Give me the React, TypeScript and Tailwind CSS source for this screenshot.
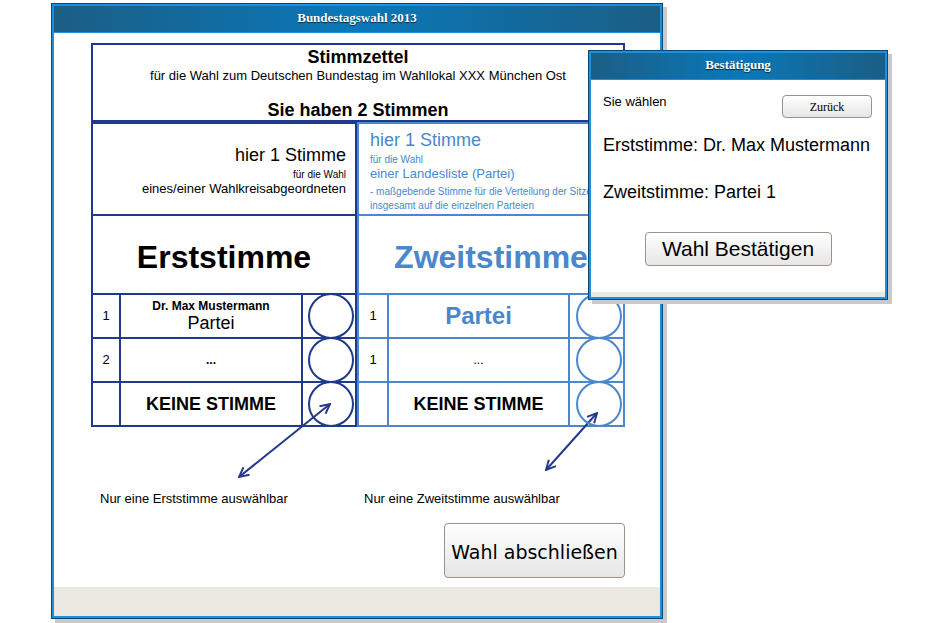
import type { ReactNode } from 'react'

function Row({ num, dark, children }: { num?: string; dark: boolean; children: ReactNode }) {
  const line = dark ? 'border-[#1f3a8c]' : 'border-[#4a87cc]'
  return (
    <div className={`flex h-[44px] border-t-2 ${line}`}>
      <div className={`flex ${dark ? 'w-[28px]' : 'w-[30px]'} items-center justify-center border-r-2 ${line} text-[13px]`}>
        {num}
      </div>
      <div className={`flex ${dark ? 'w-[182px]' : 'w-[181px]'} flex-col items-center justify-center border-r-2 ${line}`}>
        {children}
      </div>
      <div className={`relative z-10 flex flex-1 items-center ${dark ? 'pl-[5px]' : 'pl-[6px]'}`}>
        <div className={`h-[46px] w-[46px] shrink-0 rounded-full border-2 ${line}`} />
      </div>
    </div>
  )
}

function Ballot() {
  return (
    <div className="flex flex-col">
      <div className="flex h-[79px] flex-col items-center border-2 border-[#1f3a8c] pt-[1px]">
        <div className="text-[18px] font-bold leading-[22px]">Stimmzettel</div>
        <div className="text-[13px] leading-[15px]">für die Wahl zum Deutschen Bundestag im Wahllokal XXX München Ost</div>
        <div className="mt-[17px] text-[18px] font-bold leading-[20px]">Sie haben 2 Stimmen</div>
      </div>

      <div className="flex">
        {/* Erststimme */}
        <div className="w-[266px] border-2 border-[#1f3a8c]">
          <div className="h-[92px] border-b-2 border-[#1f3a8c] pr-[9px] pt-[21px] text-right">
            <div className="text-[18px] leading-[20px]">hier 1 Stimme</div>
            <div className="mt-[4px] text-[10px] leading-[12px]">für die Wahl</div>
            <div className="text-[13px] leading-[15px]">eines/einer Wahlkreisabgeordneten</div>
          </div>
          <div className="flex h-[77px] items-center justify-center pt-[4px] text-[32px] font-bold">Erststimme</div>
          <Row num="1" dark>
            <div className="text-[12px] font-bold leading-[14px]">Dr. Max Mustermann</div>
            <div className="text-[18px] leading-[20px]">Partei</div>
          </Row>
          <Row num="2" dark>
            <div className="text-[12px] font-bold leading-[14px]">...</div>
          </Row>
          <Row dark>
            <div className="text-[18px] font-bold leading-[20px]">KEINE STIMME</div>
          </Row>
        </div>

        {/* Zweitstimme */}
        <div className="w-[268px] border-2 border-[#4a87cc]">
          <div className="h-[92px] overflow-hidden whitespace-nowrap border-b-2 border-[#4a87cc] pl-[11px] pt-[6px] text-[#4a87cc]">
            <div className="text-[18px] leading-[20px]">hier 1 Stimme</div>
            <div className="mt-[4px] text-[10px] leading-[12px]">für die Wahl</div>
            <div className="text-[13px] leading-[15px]">einer Landesliste (Partei)</div>
            <div className="mt-[4px] text-[10px] leading-[14px]">- maßgebende Stimme für die Verteilung der Sitze</div>
            <div className="text-[10px] leading-[14px]">insgesamt auf die einzelnen Parteien</div>
          </div>
          <div className="flex h-[77px] items-center justify-center pt-[4px] text-[32px] font-bold text-[#4a87cc]">Zweitstimme</div>
          <Row num="1" dark={false}>
            <div className="text-[24px] font-bold leading-[28px] text-[#4a87cc]">Partei</div>
          </Row>
          <Row num="1" dark={false}>
            <div className="text-[12px] leading-[14px]">...</div>
          </Row>
          <Row dark={false}>
            <div className="text-[18px] font-bold leading-[20px]">KEINE STIMME</div>
          </Row>
        </div>
      </div>
    </div>
  )
}

function MainWindow() {
  return (
    <div className="absolute left-[51px] top-[3px] h-[616px] w-[612px] border border-[#0c4472] shadow-[4px_4px_0_#c9c9c9]">
      <div className="flex h-full flex-col border-2 border-[#1b8fe0]">
        <div className="flex h-[27px] shrink-0 items-center justify-center border-b border-[#1b8fe0] bg-[linear-gradient(90deg,#1b5e85,#0a78b9_50%,#1b5e85)] pb-[2px]">
          <span className="font-['Liberation_Serif',serif] text-[13px] font-bold text-white [text-shadow:0_1px_1px_rgba(0,0,0,0.7)]">
            Bundestagswahl 2013
          </span>
        </div>
        <div className="flex-1 bg-white">
          <div className="ml-[37px] mt-[10px] flex w-[534px] flex-col">
            <Ballot />
            <div className="mt-[64px] flex text-[13px] leading-[16px]">
              <div className="w-[273px] pl-[9px]">Nur eine Erststimme auswählbar</div>
              <div>Nur eine Zweitstimme auswählbar</div>
            </div>
            <button className="mt-[16px] h-[55px] w-[181px] self-end rounded-[4px] border border-[#9d9285] bg-[linear-gradient(#ffffff,#e6e6e6)] pt-[3px] font-['DejaVu_Sans',sans-serif] text-[19px] text-black">
              Wahl abschließen
            </button>
          </div>
        </div>
        <div className="h-[29px] shrink-0 bg-[#ebe8e2]" />
      </div>
    </div>
  )
}

function Arrows() {
  return (
    <svg className="pointer-events-none absolute left-0 top-0" width="937" height="623" viewBox="0 0 937 623">
      <defs>
        <marker id="head" viewBox="0 0 10 10" refX="9" refY="5" markerWidth="6" markerHeight="6" orient="auto-start-reverse">
          <path d="M1 1 L9 5 L1 9" fill="none" stroke="#24398a" strokeWidth="1.6" />
        </marker>
      </defs>
      <line x1="330" y1="404" x2="239" y2="477" stroke="#24398a" strokeWidth="2" markerStart="url(#head)" markerEnd="url(#head)" />
      <line x1="597" y1="413" x2="546" y2="470" stroke="#24398a" strokeWidth="2" markerStart="url(#head)" markerEnd="url(#head)" />
    </svg>
  )
}

function ConfirmDialog() {
  return (
    <div className="absolute left-[588px] top-[50px] z-20 h-[250px] w-[300px] border border-[#0c4472] bg-white shadow-[4px_4px_0_#c9c9c9]">
      <div className="flex h-full flex-col border-2 border-[#1b8fe0]">
        <div className="flex h-[27px] shrink-0 items-center justify-center border-b border-[#1b8fe0] bg-[linear-gradient(90deg,#1b5e85,#0a78b9_50%,#1b5e85)] pb-[3px]">
          <span className="font-['Liberation_Serif',serif] text-[13px] font-bold text-white [text-shadow:0_1px_1px_rgba(0,0,0,0.7)]">
            Bestätigung
          </span>
        </div>
        <div className="flex items-start justify-between pl-[12px] pr-[13px] pt-[15px]">
          <span className="text-[13px] leading-[14px]">Sie wählen</span>
          <button className="h-[23px] w-[90px] rounded-[4px] border border-[#9d9285] bg-[linear-gradient(#ffffff,#e6e6e6)] font-['Liberation_Serif',serif] text-[12px] text-black">
            Zurück
          </button>
        </div>
        <div className="mt-[16px] pl-[12px] text-[18px] leading-[22px]">Erststimme: Dr. Max Mustermann</div>
        <div className="mt-[25px] pl-[12px] text-[18px] leading-[22px]">Zweitstimme: Partei 1</div>
        <button className="mx-auto mt-[29px] h-[34px] w-[187px] rounded-[4px] border border-[#9d9285] bg-[linear-gradient(#ffffff,#e6e6e6)] text-[21px] text-black">
          Wahl Bestätigen
        </button>
        <div className="flex-1" />
        <div className="h-[5px] shrink-0 bg-[#ebe8e2]" />
      </div>
    </div>
  )
}

export default function App() {
  return (
    <div className="relative h-[623px] w-[937px] overflow-hidden bg-white font-['Liberation_Sans',Arial,sans-serif] text-black">
      <MainWindow />
      <Arrows />
      <ConfirmDialog />
    </div>
  )
}
